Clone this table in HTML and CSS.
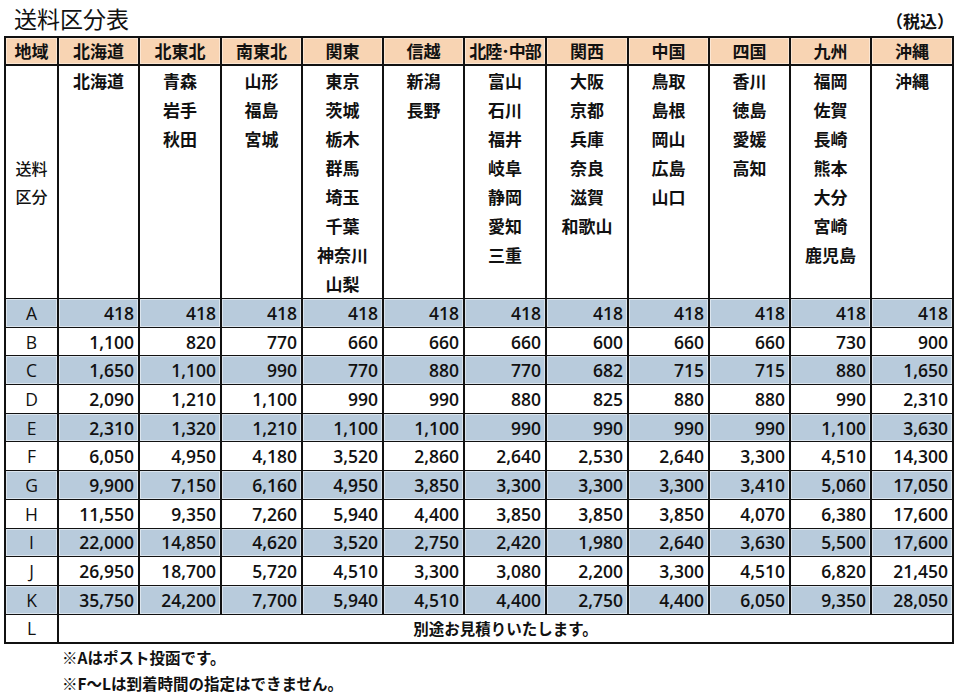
FILE: index.html
```html
<!DOCTYPE html>
<html lang="ja">
<head>
<meta charset="utf-8">
<title>送料区分表</title>
<link rel="stylesheet" href="styles.css">
</head>
<body>
<div class="page">
  <div class="titlebar">
    <h1 class="title">送料区分表</h1>
    <span class="tax">（税込）</span>
  </div>
  <table class="rates">
    <colgroup>
      <col class="c0">
      <col class="c81"><col class="c82"><col class="c81"><col class="c81"><col class="c81"><col class="c82"><col class="c82"><col class="c81"><col class="c81"><col class="c81"><col class="c82">
    </colgroup>
    <thead>
      <tr class="head">
        <th>地域</th><th>北海道</th><th>北東北</th><th>南東北</th><th>関東</th><th>信越</th><th class="tight">北陸･中部</th><th>関西</th><th>中国</th><th>四国</th><th>九州</th><th>沖縄</th>
      </tr>
    </thead>
    <tbody>
      <tr class="regions">
        <td class="side">送料<br>区分</td>
        <td><div>北海道</div></td>
        <td><div>青森</div><div>岩手</div><div>秋田</div></td>
        <td><div>山形</div><div>福島</div><div>宮城</div></td>
        <td><div>東京</div><div>茨城</div><div>栃木</div><div>群馬</div><div>埼玉</div><div>千葉</div><div>神奈川</div><div>山梨</div></td>
        <td><div>新潟</div><div>長野</div></td>
        <td><div>富山</div><div>石川</div><div>福井</div><div>岐阜</div><div>静岡</div><div>愛知</div><div>三重</div></td>
        <td><div>大阪</div><div>京都</div><div>兵庫</div><div>奈良</div><div>滋賀</div><div>和歌山</div></td>
        <td><div>鳥取</div><div>島根</div><div>岡山</div><div>広島</div><div>山口</div></td>
        <td><div>香川</div><div>徳島</div><div>愛媛</div><div>高知</div></td>
        <td><div>福岡</div><div>佐賀</div><div>長崎</div><div>熊本</div><div>大分</div><div>宮崎</div><div>鹿児島</div></td>
        <td><div>沖縄</div></td>
      </tr>
      <tr class="shade"><td class="lbl">A</td><td>418</td><td>418</td><td>418</td><td>418</td><td>418</td><td>418</td><td>418</td><td>418</td><td>418</td><td>418</td><td>418</td></tr>
      <tr><td class="lbl">B</td><td>1,100</td><td>820</td><td>770</td><td>660</td><td>660</td><td>660</td><td>600</td><td>660</td><td>660</td><td>730</td><td>900</td></tr>
      <tr class="shade"><td class="lbl">C</td><td>1,650</td><td>1,100</td><td>990</td><td>770</td><td>880</td><td>770</td><td>682</td><td>715</td><td>715</td><td>880</td><td>1,650</td></tr>
      <tr><td class="lbl">D</td><td>2,090</td><td>1,210</td><td>1,100</td><td>990</td><td>990</td><td>880</td><td>825</td><td>880</td><td>880</td><td>990</td><td>2,310</td></tr>
      <tr class="shade"><td class="lbl">E</td><td>2,310</td><td>1,320</td><td>1,210</td><td>1,100</td><td>1,100</td><td>990</td><td>990</td><td>990</td><td>990</td><td>1,100</td><td>3,630</td></tr>
      <tr><td class="lbl">F</td><td>6,050</td><td>4,950</td><td>4,180</td><td>3,520</td><td>2,860</td><td>2,640</td><td>2,530</td><td>2,640</td><td>3,300</td><td>4,510</td><td>14,300</td></tr>
      <tr class="shade"><td class="lbl">G</td><td>9,900</td><td>7,150</td><td>6,160</td><td>4,950</td><td>3,850</td><td>3,300</td><td>3,300</td><td>3,300</td><td>3,410</td><td>5,060</td><td>17,050</td></tr>
      <tr><td class="lbl">H</td><td>11,550</td><td>9,350</td><td>7,260</td><td>5,940</td><td>4,400</td><td>3,850</td><td>3,850</td><td>3,850</td><td>4,070</td><td>6,380</td><td>17,600</td></tr>
      <tr class="shade"><td class="lbl">I</td><td>22,000</td><td>14,850</td><td>4,620</td><td>3,520</td><td>2,750</td><td>2,420</td><td>1,980</td><td>2,640</td><td>3,630</td><td>5,500</td><td>17,600</td></tr>
      <tr><td class="lbl">J</td><td>26,950</td><td>18,700</td><td>5,720</td><td>4,510</td><td>3,300</td><td>3,080</td><td>2,200</td><td>3,300</td><td>4,510</td><td>6,820</td><td>21,450</td></tr>
      <tr class="shade"><td class="lbl">K</td><td>35,750</td><td>24,200</td><td>7,700</td><td>5,940</td><td>4,510</td><td>4,400</td><td>2,750</td><td>4,400</td><td>6,050</td><td>9,350</td><td>28,050</td></tr>
      <tr class="last"><td class="lbl">L</td><td class="note" colspan="11">別途お見積りいたします。</td></tr>
    </tbody>
  </table>
  <div class="notes">
    <p>※Aはポスト投函です。</p>
    <p>※F～Lは到着時間の指定はできません。</p>
  </div>
</div>
</body>
</html>
```
FILE: styles.css
```css
html, body {
  margin: 0;
  padding: 0;
  background: #ffffff;
}
body {
  font-family: "Open Sans", "Noto Sans CJK JP", sans-serif;
  color: #111111;
}
.page {
  width: 958px;
  padding: 0 0 0 4px;
  box-sizing: border-box;
}
.titlebar {
  height: 36px;
  display: flex;
  justify-content: space-between;
  align-items: flex-start;
  padding: 0 4px 0 10px;
}
.title {
  margin: 0;
  font-family: "Noto Sans CJK JP", sans-serif;
  font-weight: 400;
  font-size: 23px;
  line-height: 32px;
  padding-top: 2px;
}
.tax {
  font-family: "Noto Sans CJK JP", sans-serif;
  font-size: 17px;
  font-weight: 700;
  line-height: 22px;
  padding-top: 10px;
}
.rates {
  border-collapse: collapse;
  table-layout: fixed;
  width: 948px;
  font-size: 17.5px;
}
.c0 { width: 53px; }
.c81 { width: 81px; }
.c82 { width: 82px; }
.rates th, .rates td {
  border-left: 2px solid #111;
  border-right: 2px solid #111;
  border-top: 1px solid #111;
  border-bottom: 1px solid #111;
  padding: 0;
  white-space: nowrap;
  overflow: hidden;
}
.head th, .regions td, .note, .notes {
  font-family: "Noto Sans CJK JP", sans-serif;
}
.head th {
  background: #f8d4b3;
  height: 26px;
  font-weight: 700;
  font-size: 17px;
  line-height: 24px;
  text-align: center;
  border-top: 2px solid #111;
  border-bottom: 2px solid #111;
  box-shadow: inset 0 0 0 1px #fbe6d3;
}
.head th.tight {
  letter-spacing: -1px;
  text-overflow: clip;
}
.regions td {
  height: 228px;
  vertical-align: top;
  text-align: center;
  font-weight: 700;
  font-size: 17px;
  line-height: 29px;
  padding-top: 0;
}
.regions td.side {
  vertical-align: middle;
  font-size: 16px;
  line-height: 28px;
  font-weight: 500;
}
.rates tbody tr:not(.regions) td {
  height: 27.7px;
  text-align: right;
  padding-right: 4px;
  font-weight: 600;
  line-height: 26px;
}
.rates tbody tr:not(.regions) td.lbl {
  text-align: center;
  padding-right: 0;
  font-weight: 400;
}
.shade td {
  background: #b8cbdc;
  box-shadow: inset 0 0 0 1px #dbe5ee;
}
.rates tbody tr.last td {
  border-bottom: 2px solid #111;
}
.rates tbody tr.last td.note {
  text-align: center;
  padding-right: 0;
  font-size: 15.5px;
  font-weight: 700;
}
.notes {
  padding-left: 58px;
  padding-top: 0;
  font-size: 15.5px;
  font-weight: 700;
}
.notes p {
  margin: 0;
  line-height: 26px;
}
```
